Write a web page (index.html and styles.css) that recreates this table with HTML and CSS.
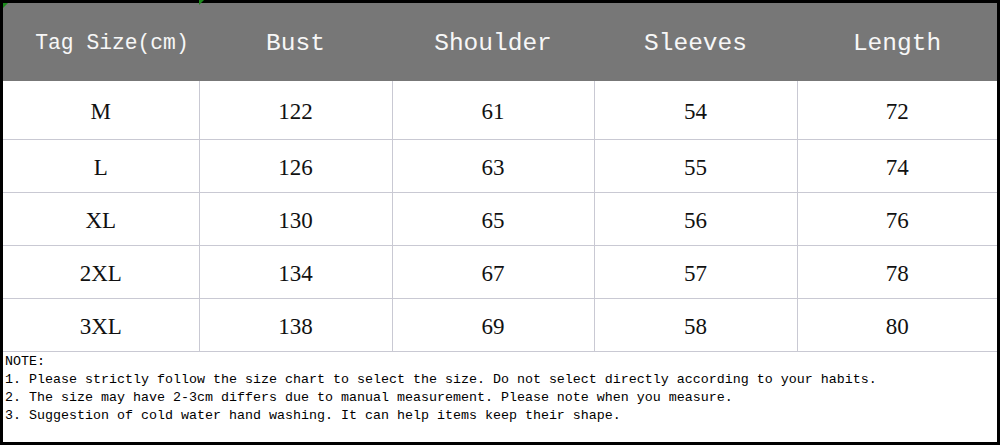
FILE: index.html
```html
<!DOCTYPE html>
<html>
<head>
<meta charset="utf-8">
<link rel="stylesheet" href="styles.css">
</head>
<body>
<div class="sheet">
  <span class="mark mark-a"></span>
  <span class="mark mark-b"></span>
  <table class="chart">
    <colgroup>
      <col class="c1"><col class="c2"><col class="c3"><col class="c4"><col class="c5">
    </colgroup>
    <thead>
      <tr class="head">
        <th class="tag">Tag Size(cm)</th>
        <th>Bust</th>
        <th>Shoulder</th>
        <th>Sleeves</th>
        <th>Length</th>
      </tr>
    </thead>
    <tbody>
      <tr class="first"><td>M</td><td>122</td><td>61</td><td>54</td><td>72</td></tr>
      <tr><td>L</td><td>126</td><td>63</td><td>55</td><td>74</td></tr>
      <tr><td>XL</td><td>130</td><td>65</td><td>56</td><td>76</td></tr>
      <tr><td>2XL</td><td>134</td><td>67</td><td>57</td><td>78</td></tr>
      <tr><td>3XL</td><td>138</td><td>69</td><td>58</td><td>80</td></tr>
    </tbody>
  </table>
  <div class="note">
    <div>NOTE:</div>
    <div>1. Please strictly follow the size chart to select the size. Do not select directly according to your habits.</div>
    <div>2. The size may have 2-3cm differs due to manual measurement. Please note when you measure.</div>
    <div>3. Suggestion of cold water hand washing. It can help items keep their shape.</div>
  </div>
</div>
</body>
</html>
```

FILE: styles.css
```css
html, body {
  margin: 0;
  padding: 0;
  background: #ffffff;
}

.sheet {
  position: relative;
  width: 1000px;
  height: 445px;
  box-sizing: border-box;
  border: 3px solid #000000;
  background: #ffffff;
  display: flex;
  flex-direction: column;
}

.chart {
  width: 994px;
  border-collapse: collapse;
  table-layout: fixed;
}

.c1 { width: 196px; }
.c2 { width: 193px; }
.c3 { width: 202px; }
.c4 { width: 203px; }
.c5 { width: 200px; }

.head {
  height: 78px;
  background: #777777;
}

.head th {
  padding: 2px 0 0 0;
  font-family: "Liberation Mono", monospace;
  font-weight: normal;
  font-size: 24.5px;
  color: #f7f7f7;
  text-align: center;
  vertical-align: middle;
}

.head th.tag {
  font-size: 21.3px;
  padding-left: 22px;
}

.chart tbody tr {
  height: 53px;
}

.chart tbody tr.first {
  height: 58px;
}

.chart td {
  padding: 4px 0 0 0;
  font-family: "Liberation Serif", serif;
  font-size: 23px;
  color: #111111;
  text-align: center;
  vertical-align: middle;
  border-bottom: 1px solid #c9c9d3;
  border-left: 1px solid #c9c9d3;
}

.chart td:first-child {
  border-left: none;
}

.note {
  flex: 1;
  padding: 1px 0 0 2px;
  font-family: "Liberation Mono", monospace;
  font-size: 13.33px;
  line-height: 18px;
  color: #000000;
  white-space: nowrap;
}

.mark {
  position: absolute;
  width: 0;
  height: 0;
  border-top: 5px solid #1a8a1a;
  border-right: 5px solid transparent;
}

.mark-a {
  left: 0;
  top: 0;
}

.mark-b {
  left: 196px;
  top: -3px;
}
```
